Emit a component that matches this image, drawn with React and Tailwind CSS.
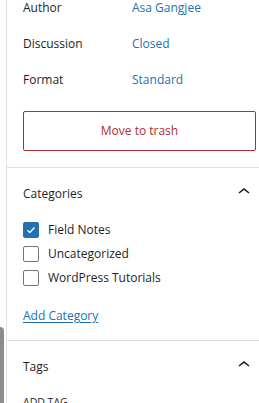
import React from "react";

const font = { fontFamily: '"Open Sans", "Noto Sans", sans-serif' };

function Chevron() {
  return (
    <svg width="24" height="24" viewBox="0 0 24 24" className="shrink-0">
      <path d="M6.5 12.4L12 8l5.5 4.4-.9 1.2L12 10l-4.6 3.6-.9-1.2z" fill="#1e1e1e" />
    </svg>
  );
}

function Checkbox({ checked }) {
  return checked ? (
    <span className="w-4 h-4 rounded-[2px] bg-[#2271b1] border border-[#2271b1] flex items-center justify-center shrink-0">
      <svg width="12" height="12" viewBox="0 0 12 12">
        <path d="M2.5 6.2l2.3 2.2 4.7-4.8" fill="none" stroke="#fff" strokeWidth="1.4" />
      </svg>
    </span>
  ) : (
    <span className="w-4 h-4 rounded-[2px] bg-white border border-[#757575] shrink-0" />
  );
}

export default function App() {
  const rows = [
    ["Author", "Asa Gangjee"],
    ["Discussion", "Closed"],
    ["Format", "Standard"],
  ];
  const cats = [
    ["Field Notes", true],
    ["Uncategorized", false],
    ["WordPress Tutorials", false],
  ];
  return (
    <div className="relative w-[259px] h-[403px] overflow-hidden bg-white flex text-[12px] text-[#1e1e1e]" style={font}>
      <div className="w-[6px] shrink-0" />
      <div className="absolute left-0 top-[327px] w-[4px] h-[90px] bg-[#8c8c8c] rounded-tr-[4px]" />
      <div className="w-[266px] shrink-0 border-l border-[#e0e0e0] flex flex-col">
        <div className="px-4 pb-4 border-b border-[#e0e0e0]">
          <div className="-mt-[10px]">
            {rows.map(([k, v]) => (
              <div key={k} className="h-9 flex items-center leading-5">
                <span className="w-[109px]">{k}</span>
                <span className="text-[#2271b1]">{v}</span>
              </div>
            ))}
          </div>
          <div className="mt-[13px] h-10 border border-[#b32d2e] rounded-[2px] flex items-center justify-center text-[#b32d2e]">
            Move to trash
          </div>
        </div>
        <div className="px-4 border-b border-[#e0e0e0]">
          <div className="h-12 flex items-center justify-between">
            <span className="font-medium pt-[4px]">Categories</span>
            <Chevron />
          </div>
          <div className="mt-[2px] flex flex-col">
            {cats.map(([c, ch]) => (
              <div key={c} className="h-6 flex items-center gap-2 leading-5">
                <Checkbox checked={ch} />
                <span className="ml-[1px]">{c}</span>
              </div>
            ))}
          </div>
          <div className="mt-4 mb-[14px] leading-5">
            <span className="text-[#2271b1] underline underline-offset-2">Add Category</span>
          </div>
        </div>
        <div className="px-4">
          <div className="h-12 flex items-center justify-between">
            <span className="font-medium pt-[3px]">Tags</span>
            <Chevron />
          </div>
          <div className="mt-[5px] text-[10.5px] leading-4 font-medium uppercase">Add Tag</div>
        </div>
      </div>
    </div>
  );
}
